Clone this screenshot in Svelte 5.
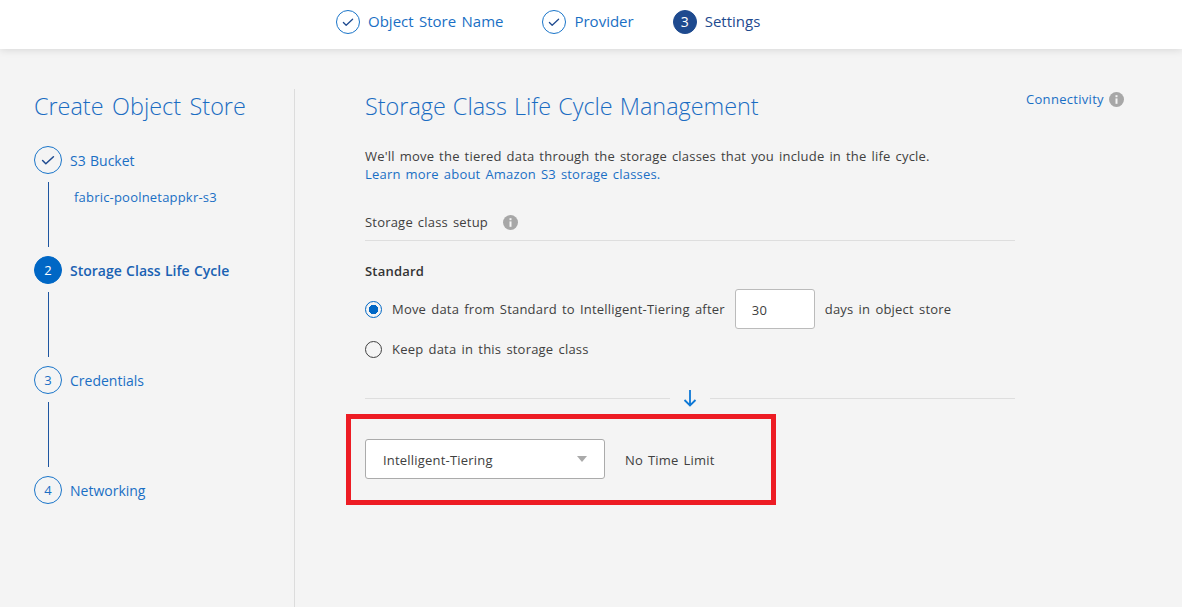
<script>
  const topSteps = [
    { label: 'Object Store Name', done: true },
    { label: 'Provider', done: true },
    { label: 'Settings', num: 3 }
  ];
  const sideSteps = [
    { num: 1, label: 'S3 Bucket', done: true, sub: 'fabric-poolnetappkr-s3' },
    { num: 2, label: 'Storage Class Life Cycle', active: true },
    { num: 3, label: 'Credentials' },
    { num: 4, label: 'Networking', last: true }
  ];
</script>

{#snippet check(size)}
  <svg width={size} height={size} viewBox="0 0 24 24" fill="none">
    <path d="M7 12.5l3 3 7-6.5" stroke="currentColor" stroke-width="1.4" stroke-linecap="round" stroke-linejoin="round" />
  </svg>
{/snippet}

{#snippet info()}
  <svg class="info" width="15" height="15" viewBox="0 0 15 15">
    <circle cx="7.5" cy="7.5" r="7.5" fill="#a7a7a7" />
    <rect x="6.5" y="6.4" width="2" height="5.4" fill="#f4f4f4" />
    <rect x="6.5" y="3.2" width="2" height="2" fill="#f4f4f4" />
  </svg>
{/snippet}

<div class="page">
  <header class="top">
    {#each topSteps as step}
      <div class="top-step" class:current={!step.done}>
        <span class="top-circle">
          {#if step.done}{@render check(22)}{:else}{step.num}{/if}
        </span>
        <span class="top-label">{step.label}</span>
      </div>
    {/each}
  </header>

  <div class="content">
    <aside class="side">
      <h1>Create Object Store</h1>
      <ol class="steps">
        {#each sideSteps as step}
          <li class="step" class:last={step.last}>
            <div class="step-head" class:active={step.active}>
              <span class="circle">
                {#if step.done}{@render check(26)}{:else}{step.num}{/if}
              </span>
              <span>{step.label}</span>
            </div>
            {#if !step.last}
              <div class="step-body">
                <span class="rail"></span>
                {#if step.sub}<span class="sub">{step.sub}</span>{/if}
              </div>
            {/if}
          </li>
        {/each}
      </ol>
    </aside>

    <main class="main">
      <div class="connectivity">Connectivity {@render info()}</div>
      <h2>Storage Class Life Cycle Management</h2>
      <p class="intro">
        We'll move the tiered data through the storage classes that you include in the life cycle.<br />
        <span class="link">Learn more about Amazon S3 storage classes.</span>
      </p>
      <div class="setup">Storage class setup {@render info()}</div>

      <h3>Standard</h3>
      <div class="radio-row first">
        <span class="radio on"></span>
        <span>Move data from Standard to Intelligent-Tiering after</span>
        <span class="days">30</span>
        <span>days in object store</span>
      </div>
      <div class="radio-row">
        <span class="radio"></span>
        <span>Keep data in this storage class</span>
      </div>

      <div class="divider">
        <svg width="14" height="17" viewBox="0 0 14 17" fill="none">
          <path d="M7 0v15.5M1.5 10l5.5 5.5 5.5-5.5" stroke="#0e78d5" stroke-width="1.8" />
        </svg>
      </div>

      <div class="tier">
        <div class="select">
          <span class="tier-text">Intelligent-Tiering</span>
          <span class="caret"></span>
        </div>
        <span class="tier-text">No Time Limit</span>
        <div class="annotation"></div>
      </div>
    </main>
  </div>
</div>

<style>
  :global(body) {
    margin: 0;
    background: #f4f4f4;
    overflow: hidden;
  }

  .page {
    height: 607px;
    overflow: hidden;
    background: #f4f4f4;
    color: #404040;
    font-family: "Open Sans", "Noto Sans", sans-serif;
    font-size: 13px;
    letter-spacing: 0.2px;
    word-spacing: 1.4px;
  }

  .top {
    display: flex;
    align-items: center;
    gap: 39px;
    height: 43px;
    padding: 0 0 6px 336px;
    background: white;
    box-shadow: 0 1px 8px rgba(0, 0, 0, 0.12);
    position: relative;
  }

  .top-step {
    display: flex;
    align-items: center;
    gap: 8px;
    color: #1a6fc4;
    font-size: 15px;
    letter-spacing: 0;
    word-spacing: 1.5px;
  }

  .top-step.current {
    color: #1e4a8f;
  }

  .top-label {
    padding-bottom: 2px;
  }

  .top-circle {
    display: flex;
    align-items: center;
    justify-content: center;
    box-sizing: border-box;
    width: 24px;
    height: 24px;
    border: 1px solid #1a75c9;
    border-radius: 50%;
    color: #1e4a8f;
  }

  .current .top-circle {
    background: #1e4a8f;
    border-color: #1e4a8f;
    color: white;
    font-size: 14px;
  }

  .content {
    display: flex;
    padding-top: 40px;
  }

  .side {
    box-sizing: border-box;
    width: 295px;
    height: 518px;
    padding-left: 34px;
    border-right: 1px solid #dcdcdc;
  }

  h1,
  h2 {
    margin: 0;
    font-weight: 350;
    font-size: 23.4px;
    line-height: 36px;
    color: #1a6cc2;
    letter-spacing: 0;
    word-spacing: 2.5px;
  }

  h1 {
    margin-top: -1px;
  }

  h2 {
    margin-top: -1px;
    word-spacing: 1px;
  }

  .steps {
    list-style: none;
    margin: 22px 0 0;
    padding: 0;
  }

  .step {
    height: 110px;
  }

  .step-head {
    display: flex;
    align-items: center;
    gap: 8px;
    height: 28px;
    color: #1a6fc4;
    font-size: 14px;
    letter-spacing: 0;
    word-spacing: 0.7px;
  }

  .step-head.active {
    font-weight: 600;
    color: #1a62b3;
  }

  .circle {
    display: flex;
    align-items: center;
    justify-content: center;
    box-sizing: border-box;
    width: 28px;
    height: 28px;
    border: 1px solid #1a75c9;
    border-radius: 50%;
    font-size: 13px;
    font-weight: 400;
  }

  .step-head:not(.active) .circle {
    color: #1a6fc4;
  }

  .step-head:not(.active) .circle svg {
    color: #1e4a8f;
  }

  .active .circle {
    background: #0067c5;
    border-color: #0067c5;
    color: white;
  }

  .step-body {
    display: flex;
    height: 65px;
    margin-top: 8px;
    padding-left: 14px;
  }

  .rail {
    flex: none;
    width: 1px;
    background: #1e55a0;
  }

  .sub {
    margin: 6px 0 0 25px;
    color: #1a6fc4;
    font-size: 13px;
    line-height: 18px;
  }

  .main {
    position: relative;
    box-sizing: border-box;
    width: 720px;
    padding-left: 70px;
  }

  .connectivity {
    position: absolute;
    left: 731px;
    top: 1px;
    display: flex;
    align-items: center;
    gap: 5px;
    white-space: nowrap;
    letter-spacing: 0.3px;
    color: #1a6fc4;
  }

  .intro {
    margin: 23px 0 0;
    line-height: 18px;
  }

  .link {
    color: #1a6fc4;
  }

  .setup {
    display: flex;
    align-items: center;
    gap: 15px;
    height: 36px;
    margin-top: 21px;
    border-bottom: 1px solid #dedede;
  }

  h3 {
    margin: 21px 0 0;
    font-size: 13px;
    font-weight: 600;
    line-height: 18px;
    color: #333;
  }

  .radio-row {
    display: flex;
    align-items: center;
    gap: 10px;
    height: 40px;
    word-spacing: 1.6px;
  }

  .radio-row.first {
    margin-top: 9px;
  }

  .radio {
    box-sizing: border-box;
    width: 17px;
    height: 17px;
    border: 1px solid #404040;
    border-radius: 50%;
  }

  .radio.on {
    border-color: #0067c5;
    background: radial-gradient(circle, #0067c5 0 4.5px, transparent 5px);
  }

  .days {
    box-sizing: border-box;
    width: 80px;
    height: 40px;
    padding-left: 16px;
    line-height: 40px;
    background: white;
    border: 1px solid #bbb;
    border-radius: 3px;
  }

  .divider {
    display: flex;
    justify-content: center;
    align-items: flex-start;
    width: 650px;
    height: 18px;
    margin-top: 21px;
    background: linear-gradient(#dedede, #dedede) 0 8px / 305px 1px no-repeat,
      linear-gradient(#dedede, #dedede) 345px 8px / 305px 1px no-repeat;
  }

  .tier {
    position: relative;
    display: flex;
    align-items: center;
    gap: 20px;
    margin-top: 31px;
  }

  .tier-text {
    padding-top: 2px;
  }

  .select {
    display: flex;
    align-items: center;
    justify-content: space-between;
    box-sizing: border-box;
    width: 240px;
    height: 40px;
    padding: 0 17px;
    background: white;
    border: 1px solid #ababab;
    border-radius: 3px;
  }

  .caret {
    width: 0;
    height: 0;
    border-left: 5.5px solid transparent;
    border-right: 5.5px solid transparent;
    border-top: 6px solid #aaa;
  }

  .annotation {
    position: absolute;
    left: -19px;
    top: -25px;
    width: 430px;
    height: 91px;
    box-sizing: border-box;
    border: 5px solid #ed1c24;
  }
</style>
